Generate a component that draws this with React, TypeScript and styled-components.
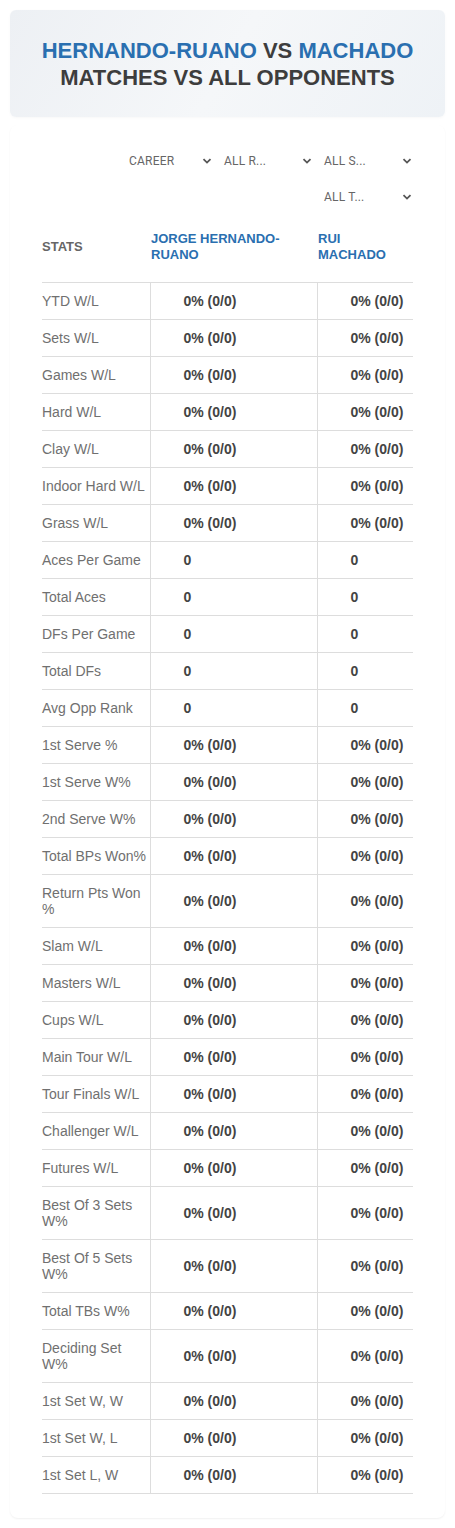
import styled, { createGlobalStyle } from "styled-components";

const GlobalStyle = createGlobalStyle`
  * { box-sizing: border-box; }
  body {
    margin: 0;
    background: #fff;
    font-family: "Liberation Sans", Arial, sans-serif;
  }
`;

const percent = "0% (0/0)";

const rows: [string, string][] = [
  ["YTD W/L", percent],
  ["Sets W/L", percent],
  ["Games W/L", percent],
  ["Hard W/L", percent],
  ["Clay W/L", percent],
  ["Indoor Hard W/L", percent],
  ["Grass W/L", percent],
  ["Aces Per Game", "0"],
  ["Total Aces", "0"],
  ["DFs Per Game", "0"],
  ["Total DFs", "0"],
  ["Avg Opp Rank", "0"],
  ["1st Serve %", percent],
  ["1st Serve W%", percent],
  ["2nd Serve W%", percent],
  ["Total BPs Won%", percent],
  ["Return Pts Won %", percent],
  ["Slam W/L", percent],
  ["Masters W/L", percent],
  ["Cups W/L", percent],
  ["Main Tour W/L", percent],
  ["Tour Finals W/L", percent],
  ["Challenger W/L", percent],
  ["Futures W/L", percent],
  ["Best Of 3 Sets W%", percent],
  ["Best Of 5 Sets W%", percent],
  ["Total TBs W%", percent],
  ["Deciding Set W%", percent],
  ["1st Set W, W", percent],
  ["1st Set W, L", percent],
  ["1st Set L, W", percent],
];

const filters = [
  { label: "CAREER", width: 83 },
  { label: "ALL R...", width: 88 },
  { label: "ALL S...", width: 88 },
  { label: "ALL T...", width: 88 },
];

const Chevron = () => (
  <svg width="10" height="10" viewBox="0 0 10 10">
    <path d="M1.5 3.2 L5 6.6 L8.5 3.2" fill="none" stroke="#555" strokeWidth="1.8" />
  </svg>
);

const App = () => {
  return (
    <Page>
      <GlobalStyle />
      <Hero>
        <HeroTitle>
          <Blue>HERNANDO-RUANO</Blue> VS <Blue>MACHADO</Blue>
          <br />
          MATCHES VS ALL OPPONENTS
        </HeroTitle>
      </Hero>
      <Card>
        <Filters>
          {filters.map((f) => (
            <Select key={f.label} $width={f.width}>
              <span>{f.label}</span>
              <Chevron />
            </Select>
          ))}
        </Filters>
        <Table>
          <colgroup>
            <col style={{ width: 108 }} />
            <col style={{ width: 167 }} />
            <col />
          </colgroup>
          <thead>
            <tr>
              <HeadCell>STATS</HeadCell>
              <HeadCell $player>JORGE HERNANDO-RUANO</HeadCell>
              <HeadCell $player>RUI MACHADO</HeadCell>
            </tr>
          </thead>
          <tbody>
            {rows.map(([label, value]) => (
              <Row key={label}>
                <Label>{label}</Label>
                <Value>{value}</Value>
                <Value>{value}</Value>
              </Row>
            ))}
          </tbody>
        </Table>
      </Card>
    </Page>
  );
};

export default App;

const Page = styled.div`
  padding: 10px 10px 8px;
`;

const Hero = styled.div`
  height: 107px;
  border-radius: 6px;
  background: linear-gradient(120deg, #edf0f4 0%, #f5f7f9 50%, #eef2f6 100%);
  box-shadow: 0 1px 3px rgba(0, 0, 0, 0.03);
  display: flex;
  align-items: center;
  justify-content: center;
`;

const HeroTitle = styled.h1`
  margin: 0;
  font-size: 22px;
  line-height: 27px;
  font-weight: 700;
  color: #3d3d3d;
  text-align: center;
`;

const Blue = styled.span`
  color: #2a6fb0;
`;

const Card = styled.div`
  margin-top: 8px;
  padding: 22px 32px 24px;
  border-radius: 8px;
  box-shadow: 0 1px 2px rgba(0, 0, 0, 0.06);
`;

const Filters = styled.div`
  display: flex;
  flex-wrap: wrap;
  justify-content: flex-end;
  column-gap: 12px;
  row-gap: 8px;
  padding-right: 1px;
`;

const Select = styled.div<{ $width: number }>`
  width: ${(p) => p.$width}px;
  height: 28px;
  display: flex;
  align-items: center;
  justify-content: space-between;
  font-family: Roboto, "Noto Sans", sans-serif;
  font-size: 12px;
  color: #666;
  letter-spacing: 0.2px;
`;

const Table = styled.table`
  width: 100%;
  margin-top: 9px;
  border-collapse: collapse;
  table-layout: fixed;
`;

const HeadCell = styled.th<{ $player?: boolean }>`
  text-align: left;
  vertical-align: middle;
  padding: ${(p) => (p.$player ? "11px 10px 19px 1px" : "11px 0 19px")};
  font-size: 13px;
  line-height: 16px;
  font-weight: 700;
  color: ${(p) => (p.$player ? "#2a6fb0" : "#666")};
  border-bottom: 1px solid #ddd;
`;

const Row = styled.tr`
  border-bottom: 1px solid #ddd;
`;

const Label = styled.td`
  padding: 10px 0;
  font-size: 14px;
  line-height: 16px;
  color: #707070;
  border-right: 1px solid #ddd;
`;

const Value = styled.td`
  padding: 10px 4px 10px 33px;
  font-size: 14px;
  line-height: 16px;
  font-weight: 700;
  color: #444;
  & + & {
    border-left: 1px solid #ddd;
  }
`;
